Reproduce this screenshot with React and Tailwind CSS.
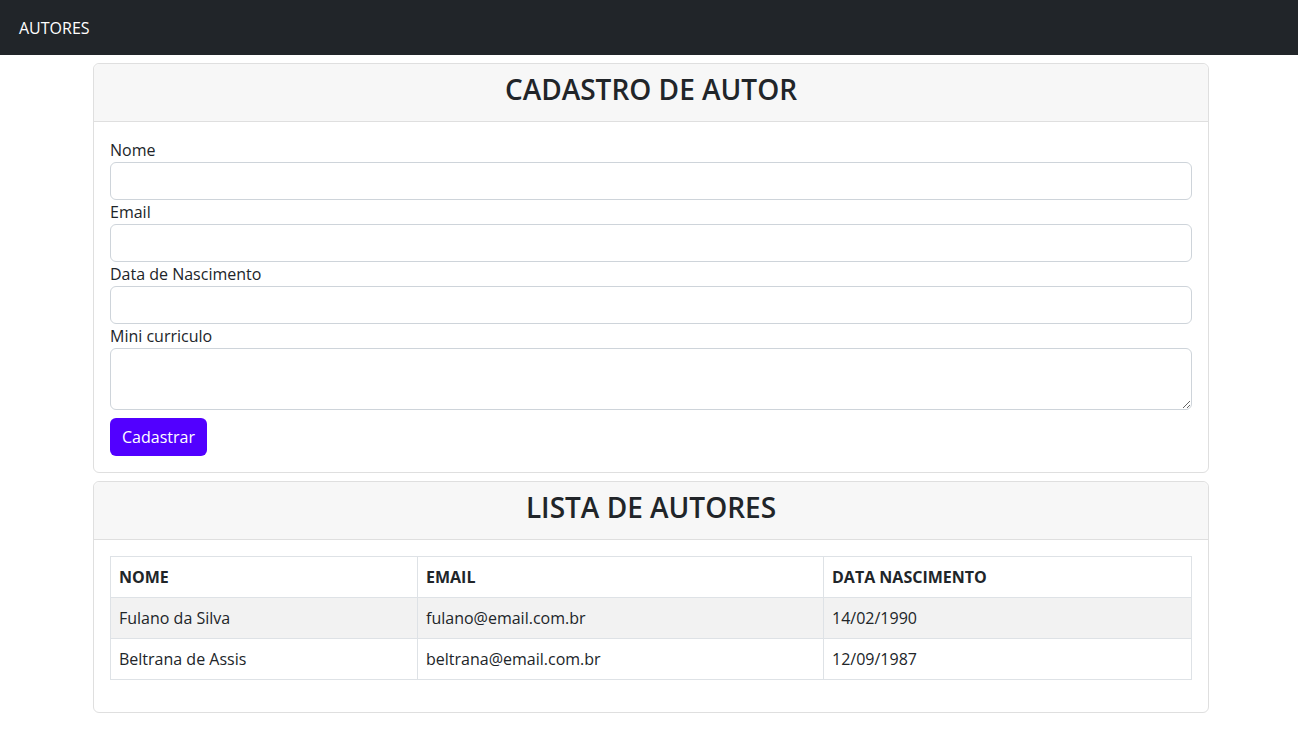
import React from 'react';

const autores = [
  { nome: 'Fulano da Silva', email: 'fulano@email.com.br', nascimento: '14/02/1990' },
  { nome: 'Beltrana de Assis', email: 'beltrana@email.com.br', nascimento: '12/09/1987' },
];

const Field = ({ label, children }) => (
  <div>
    <label className="block leading-6">{label}</label>
    {children}
  </div>
);

const inputClass =
  'block w-full h-[38px] rounded-[6px] border border-[#ced4da] bg-white px-3 outline-none';

const Card = ({ title, children }) => (
  <div className="mt-2 rounded-[6px] border border-[#dfdfdf] bg-white">
    <div className="border-b border-[#dfdfdf] bg-[#f7f7f7] px-4 pt-2 pb-[15px] rounded-t-[6px]">
      <h3 className="text-center text-[28px] leading-[34px] font-semibold">{title}</h3>
    </div>
    <div className="p-4">{children}</div>
  </div>
);

export default function App() {
  return (
    <div
      className="min-h-screen bg-white text-[16px] text-[#212529]"
      style={{ fontFamily: '"Open Sans", "Noto Sans", sans-serif' }}
    >
      <nav className="h-[55px] bg-[#212529] flex items-center px-[19px]">
        <span className="text-white text-[16px]">AUTORES</span>
      </nav>

      <div className="ml-[81px] w-[1140px] px-3">
        <Card title="CADASTRO DE AUTOR">
          <form onSubmit={(e) => e.preventDefault()}>
            <Field label="Nome">
              <input type="text" className={inputClass} />
            </Field>
            <Field label="Email">
              <input type="email" className={inputClass} />
            </Field>
            <Field label="Data de Nascimento">
              <input type="text" className={inputClass} />
            </Field>
            <Field label="Mini curriculo">
              <textarea
                rows={2}
                className="block w-full h-[62px] rounded-[6px] border border-[#ced4da] bg-white px-3 py-1.5 outline-none"
              />
            </Field>
            <button
              type="submit"
              className="mt-2 h-[38px] rounded-[6px] bg-[#5200ff] px-3 text-white"
            >
              Cadastrar
            </button>
          </form>
        </Card>

        <Card title="LISTA DE AUTORES">
          <table className="mb-4 w-full border-collapse border border-[#dee2e6]">
            <thead>
              <tr className="h-[41px]">
                <th className="w-[307px] border border-[#dee2e6] px-2 text-left font-bold">NOME</th>
                <th className="w-[406px] border border-[#dee2e6] px-2 text-left font-bold">EMAIL</th>
                <th className="border border-[#dee2e6] px-2 text-left font-bold">DATA NASCIMENTO</th>
              </tr>
            </thead>
            <tbody>
              {autores.map((a, i) => (
                <tr key={a.email} className={`h-[41px] ${i % 2 === 0 ? 'bg-[#f2f2f2]' : 'bg-white'}`}>
                  <td className="border border-[#dee2e6] px-2">{a.nome}</td>
                  <td className="border border-[#dee2e6] px-2">{a.email}</td>
                  <td className="border border-[#dee2e6] px-2">{a.nascimento}</td>
                </tr>
              ))}
            </tbody>
          </table>
        </Card>
      </div>
    </div>
  );
}
